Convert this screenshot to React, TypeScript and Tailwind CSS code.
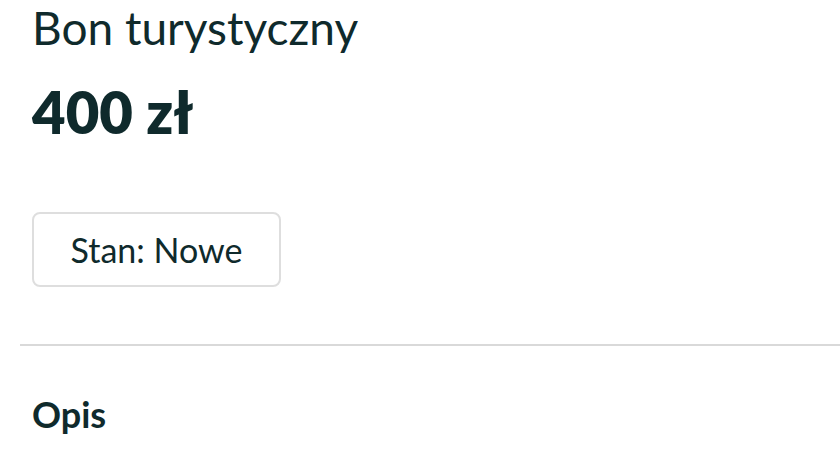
export default function App(){
  return(
    <div className="w-[840px] h-[454px] bg-white overflow-hidden text-[#0f2a2c]" style={{fontFamily:'Lato, "Noto Sans", sans-serif'}}>
      <div className="pl-8">
        <h1 className="text-[46px] leading-[56px] font-normal">Bon turystyczny</h1>
        <p className="mt-[24px] text-[58px] leading-[64px] font-extrabold">400 zł</p>
        <div className="mt-[68px] w-[249px] h-[75px] rounded-lg border-2 border-[#dedede] flex items-center justify-center">
          <span className="text-[34px] leading-none">Stan: Nowe</span>
        </div>
      </div>
      <div className="mt-[57px] ml-5 h-[2px] bg-[#d9d9d9]"/>
      <div className="pl-8 mt-[46px]">
        <h2 className="text-[36px] leading-[44px] font-bold">Opis</h2>
      </div>
    </div>
  );
}
